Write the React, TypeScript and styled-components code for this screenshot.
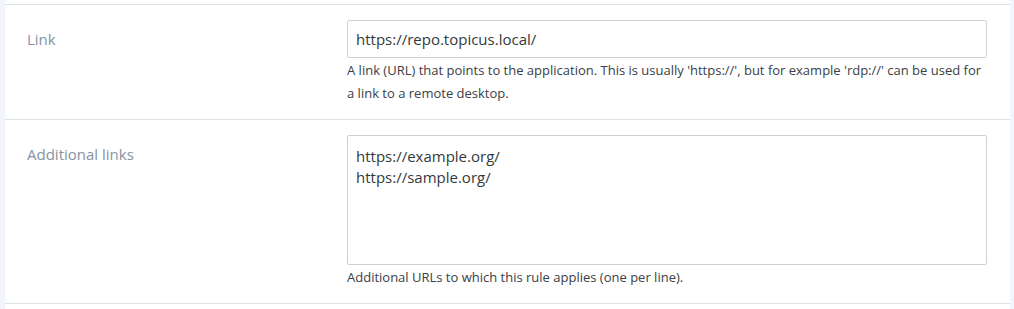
import React from 'react';
import styled, { createGlobalStyle } from 'styled-components';

const GlobalStyle = createGlobalStyle`
  html, body {
    margin: 0;
    padding: 0;
    background: #f2f5f9;
    font-family: 'Open Sans', 'Liberation Sans', sans-serif;
  }
`;

const Panel = styled.div`
  margin: 0 4px 0 5px;
  padding: 4px 0 12px;
  background: #ffffff;
`;

const Row = styled.div`
  display: grid;
  grid-template-columns: 320px 1fr;
  padding: 15px 23px 14px 22px;
  border-top: 1px solid #dde2e7;

  &:last-child {
    border-bottom: 1px solid #dde2e7;
  }
`;

const Label = styled.label`
  font-size: 15px;
  line-height: 38px;
  color: #8593a3;
`;

const Control = styled.div`
  display: flex;
  flex-direction: column;
`;

const TextInput = styled.input`
  box-sizing: border-box;
  width: 100%;
  height: 38px;
  padding: 0 8px;
  border: 1px solid #cdd1d5;
  border-radius: 2px;
  font-family: inherit;
  font-size: 15px;
  color: #333a40;
  background: #fff;
  outline: none;
`;

const TextArea = styled.textarea`
  box-sizing: border-box;
  width: 100%;
  height: 130px;
  padding: 10px 8px;
  border: 1px solid #cdd1d5;
  border-radius: 2px;
  font-family: inherit;
  font-size: 15px;
  line-height: 21px;
  color: #333a40;
  background: #fff;
  resize: none;
  outline: none;
`;

const Help = styled.div`
  margin-top: 1px;
  font-size: 13px;
  line-height: 23px;
  color: #3a4046;
`;

export default function App() {
  return (
    <>
      <GlobalStyle />
      <Panel>
        <Row>
          <Label>Link</Label>
          <Control>
            <TextInput defaultValue="https://repo.topicus.local/" />
            <Help>
              A link (URL) that points to the application. This is usually 'https://', but for example 'rdp://' can be used for a link to a remote desktop.
            </Help>
          </Control>
        </Row>
        <Row>
          <Label>Additional links</Label>
          <Control>
            <TextArea defaultValue={'https://example.org/\nhttps://sample.org/'} />
            <Help>Additional URLs to which this rule applies (one per line).</Help>
          </Control>
        </Row>
      </Panel>
    </>
  );
}
